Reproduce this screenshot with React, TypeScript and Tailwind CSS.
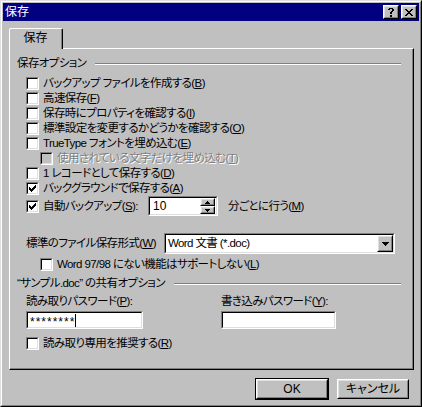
import type { ReactNode } from 'react';

// pixel glyphs, one string per row, X = black pixel
function Bitmap({ rows, color = '#000' }: { rows: string[]; color?: string }) {
  const w = rows[0].length;
  const h = rows.length;
  const cells: ReactNode[] = [];
  rows.forEach((row, y) =>
    row.split('').forEach((c, x) => {
      if (c === 'X') cells.push(<rect key={`${x}-${y}`} x={x} y={y} width="1" height="1" fill={color} />);
    })
  );
  return (
    <svg width={w} height={h} viewBox={`0 0 ${w} ${h}`} shapeRendering="crispEdges" className="block">
      {cells}
    </svg>
  );
}

const CHECK = ['......X', '.....XX', 'X...XXX', 'XX.XXX.', 'XXXXX..', '.XXX...', '..X....'];
const CLOSE = ['XX....XX', '.XX..XX.', '..XXXX..', '...XX...', '..XXXX..', '.XX..XX.', 'XX....XX'];
const HELP = ['.XXXX.', 'XX..XX', '....XX', '...XX.', '..XX..', '..XX..', '......', '..XX..', '..XX..'];
const DOWN = ['XXXXXXX', '.XXXXX.', '..XXX..', '...X...'];
const SPIN_UP = ['..X..', '.XXX.', 'XXXXX'];
const SPIN_DOWN = ['XXXXX', '.XXX.', '..X..'];

function Raised({ className = '', children }: { className?: string; children?: ReactNode }) {
  return (
    <div className={`border border-t-white border-l-white border-b-black border-r-black ${className}`}>
      <div className="w-full h-full border border-t-[#dfdfdf] border-l-[#dfdfdf] border-b-[#808080] border-r-[#808080] bg-[#c0c0c0] flex items-center justify-center">
        {children}
      </div>
    </div>
  );
}

function Sunken({ className = '', inner = 'bg-white', children }: { className?: string; inner?: string; children?: ReactNode }) {
  return (
    <div className={`border border-t-[#808080] border-l-[#808080] border-b-white border-r-white shrink-0 ${className}`}>
      <div className={`w-full h-full border border-t-black border-l-black border-b-[#dfdfdf] border-r-[#dfdfdf] ${inner} flex items-center`}>
        {children}
      </div>
    </div>
  );
}

function Checkbox({ checked = false, disabled = false }: { checked?: boolean; disabled?: boolean }) {
  return (
    <Sunken className="w-[13px] h-[13px]" inner={disabled ? 'bg-[#c0c0c0]' : 'bg-white'}>
      {checked && (
        <div className="pl-[1px]">
          <Bitmap rows={CHECK} />
        </div>
      )}
    </Sunken>
  );
}

function CheckRow({ children, checked, disabled, indent }: { children: ReactNode; checked?: boolean; disabled?: boolean; indent?: boolean }) {
  return (
    <div className={`h-[15px] flex items-center ${indent ? 'pl-[23px]' : 'pl-[9px]'}`}>
      <Checkbox checked={checked} disabled={disabled} />
      <span className={`ml-[4px] whitespace-nowrap ${disabled ? 'text-[#808080] [text-shadow:1px_1px_0_#fff]' : ''}`}>{children}</span>
    </div>
  );
}

function GroupHeader({ children }: { children: ReactNode }) {
  return (
    <div className="h-[15px] flex items-center">
      <span className="whitespace-nowrap">{children}</span>
      <div className="flex-1 ml-[9px] mr-[11px] h-[2px] border-t border-t-[#808080] border-b border-b-white" />
    </div>
  );
}

export default function App() {
  return (
    <div className="w-[422px] h-[407px] bg-[#c0c0c0] border border-t-[#dfdfdf] border-l-[#dfdfdf] border-b-black border-r-black font-['Liberation_Sans','Noto_Sans_CJK_JP',sans-serif] [font-feature-settings:'palt'] text-[11.5px] leading-[15px] tracking-[-0.6px] text-black select-none">
      <div className="w-full h-full border border-t-white border-l-white border-b-[#808080] border-r-[#808080] p-[1px] flex flex-col">
        {/* Title bar */}
        <div className="h-[18px] bg-[#000080] flex items-center pl-[2px] pr-[2px]">
          <span className="text-white text-[12px] tracking-normal">保存</span>
          <div className="ml-auto flex gap-[2px]">
            <Raised className="w-[16px] h-[14px]">
              <Bitmap rows={HELP} />
            </Raised>
            <Raised className="w-[16px] h-[14px]">
              <Bitmap rows={CLOSE} />
            </Raised>
          </div>
        </div>

        {/* Tab */}
        <div className="mt-[7px] ml-[6px] flex relative z-10 -mb-[1px]">
          <div className="w-[54px] h-[21px] border-t border-l border-r border-t-white border-l-white border-r-black bg-[#c0c0c0] rounded-tl-[2px] rounded-tr-[2px]">
            <div className="h-full border-r border-r-[#808080] flex items-center justify-center pb-[1px] text-[12px] tracking-normal">保存</div>
          </div>
        </div>

        {/* Panel */}
        <div className="ml-[6px] w-[405px] h-[322px] border border-t-white border-l-white border-b-black border-r-black">
          <div className="h-full border-r border-b border-r-[#808080] border-b-[#808080] pl-[7px] pt-[7px] flex flex-col">
            <GroupHeader>保存オプション</GroupHeader>
            <div className="mt-[5px] flex flex-col">
              <CheckRow>バックアップ ファイルを作成する(<u>B</u>)</CheckRow>
              <CheckRow>高速保存(<u>F</u>)</CheckRow>
              <CheckRow>保存時にプロパティを確認する(<u>I</u>)</CheckRow>
              <CheckRow>標準設定を変更するかどうかを確認する(<u>O</u>)</CheckRow>
              <CheckRow>TrueType フォントを埋め込む(<u>E</u>)</CheckRow>
              <CheckRow disabled indent>使用されている文字だけを埋め込む(<u>T</u>)</CheckRow>
              <CheckRow>1 レコードとして保存する(<u>D</u>)</CheckRow>
              <CheckRow checked>バックグラウンドで保存する(<u>A</u>)</CheckRow>
              <div className="h-[20px] flex items-center pl-[9px]">
                <Checkbox checked />
                <span className="ml-[4px] w-[105px] whitespace-nowrap">自動バックアップ(<u>S</u>):</span>
                <Sunken className="w-[70px] h-[20px]">
                  <span className="pl-[3px] flex-1 text-[12px] tracking-normal">10</span>
                  <div className="flex flex-col mr-[1px]">
                    <Raised className="w-[15px] h-[8px]">
                      <Bitmap rows={SPIN_UP} />
                    </Raised>
                    <Raised className="w-[15px] h-[8px]">
                      <Bitmap rows={SPIN_DOWN} />
                    </Raised>
                  </div>
                </Sunken>
                <span className="ml-[10px] whitespace-nowrap">分ごとに行う(<u>M</u>)</span>
              </div>
            </div>

            <div className="mt-[17px] h-[21px] flex items-center pl-[9px]">
              <span className="w-[138px] whitespace-nowrap">標準のファイル保存形式(<u>W</u>)</span>
              <Sunken className="w-[231px] h-[21px]">
                <span className="pl-[2px] flex-1 whitespace-nowrap">Word 文書 (*.doc)</span>
                <Raised className="w-[16px] h-[17px]">
                  <Bitmap rows={DOWN} />
                </Raised>
              </Sunken>
            </div>

            <div className="mt-[3px]">
              <CheckRow indent>Word 97/98 にない機能はサポートしない(<u>L</u>)</CheckRow>
            </div>

            <div className="mt-[4px]">
              <GroupHeader>“サンプル.doc” の共有オプション</GroupHeader>
            </div>

            <div className="mt-[3px] flex pl-[9px]">
              <div className="w-[195px] flex flex-col">
                <span className="h-[15px] whitespace-nowrap">読み取りパスワード(<u>P</u>):</span>
                <Sunken className="mt-[2px] w-[117px] h-[18px]">
                  <span className="pl-[2px] text-[12px] tracking-[1px] leading-[12px] pt-[3px]">********</span>
                  <div className="w-[1px] h-[13px] bg-black" />
                </Sunken>
              </div>
              <div className="flex flex-col">
                <span className="h-[15px] whitespace-nowrap">書き込みパスワード(<u>Y</u>):</span>
                <Sunken className="mt-[2px] w-[115px] h-[18px]" />
              </div>
            </div>

            <div className="mt-[7px]">
              <CheckRow>読み取り専用を推奨する(<u>R</u>)</CheckRow>
            </div>
          </div>
        </div>

        {/* Buttons */}
        <div className="mt-[8px] flex items-center justify-end gap-[8px] pr-[10px] text-[12px] tracking-normal">
          <div className="w-[74px] h-[22px] border border-black">
            <Raised className="w-full h-full">OK</Raised>
          </div>
          <Raised className="w-[72px] h-[20px]">キャンセル</Raised>
        </div>
      </div>
    </div>
  );
}
